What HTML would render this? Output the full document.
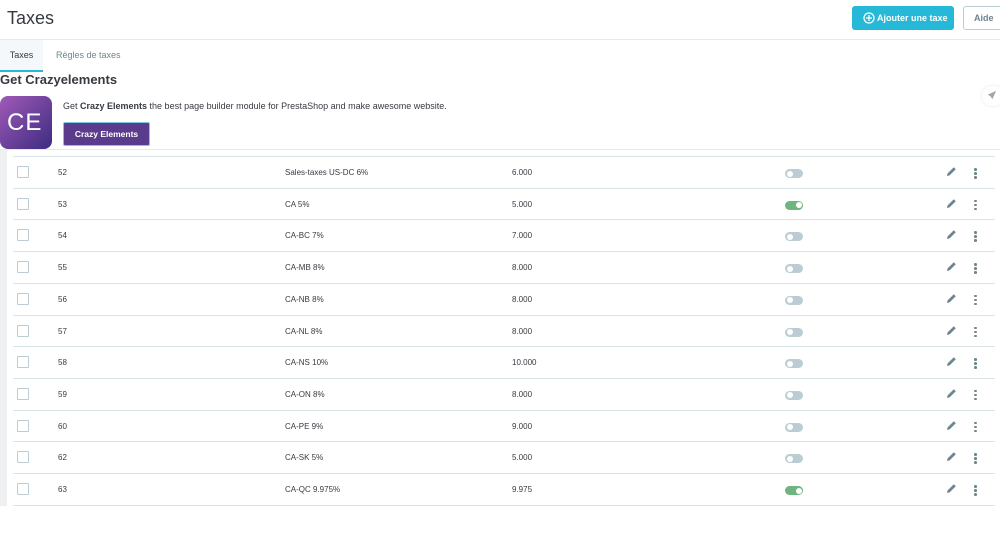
<!DOCTYPE html>
<html><head><meta charset="utf-8"><style>
*{box-sizing:border-box;margin:0;padding:0}
body{width:1000px;height:506px;overflow:hidden;background:#fff;font-family:"Liberation Sans",sans-serif;color:#363a41;position:relative}
.abs{position:absolute}
h1{position:absolute;left:7px;top:8px;font-size:18px;font-weight:normal;color:#363a41}
.btn1{position:absolute;left:852px;top:6px;width:102px;height:24px;background:#25b9d7;border-radius:3px;color:#fff;font-size:9px;font-weight:bold;line-height:24px;padding-left:25px;white-space:nowrap}
.btn2{position:absolute;left:963px;top:6px;width:40px;height:24px;border:1px solid #bbcdd2;border-radius:3px;color:#6c868e;font-size:9px;font-weight:bold;line-height:22px;padding-left:10px}
.hline{position:absolute;left:0;top:39px;width:1000px;height:1px;background:#e6eaec}
.tab1{position:absolute;left:0;top:40px;width:43px;height:32px;background:#f4f8fa;border-bottom:2px solid #25b9d7;font-size:9px;color:#363a41;line-height:31px;text-align:center}
.tab2{position:absolute;left:56px;top:40px;font-size:9px;color:#6c868e;line-height:31px}
.gc{position:absolute;left:0;top:72px;font-size:13px;font-weight:bold;color:#363a41}
.logo{position:absolute;left:0;top:96px;width:52px;height:53px;border-radius:8px;background:linear-gradient(135deg,#a05ab8,#3c2c80);color:#fff;font-size:24px;font-weight:normal;line-height:53px;padding-left:7px;letter-spacing:1px}
.desc{position:absolute;left:63px;top:101px;font-size:9px;color:#363a41}
.cbtn{position:absolute;left:63px;top:122px;width:87px;height:24px;background:#5b3b8c;border:1px solid #7cc8e0;border-radius:2px;color:#fff;font-size:8.5px;font-weight:bold;text-align:center;line-height:22px}
.sep{position:absolute;left:0;top:149px;width:1000px;height:1px;background:#e6eaec}
.strip{position:absolute;left:0;top:150px;width:7px;height:356px;background:#eef0f2}
.row{position:absolute;left:13px;width:982px;height:31.7px;border-top:1px solid #d9e4e7;font-size:8px;color:#363a41}
.row span{position:absolute;top:11px}
.cb{position:absolute;left:4px;top:9px;width:12px;height:12px;border:1px solid #bbcdd2;border-radius:1px;background:#fff}
.tg{position:absolute;left:772px;top:12px;width:18px;height:9px;border-radius:5px;background:#bbcdd2}
.tg::after{content:"";position:absolute;left:1.5px;top:1.5px;width:6px;height:6px;border-radius:50%;background:#fff}
.tg.on{background:#70b580}.tg.on::after{left:10.5px}
.pen{position:absolute;left:933px;top:9px}
.dots{position:absolute;left:961px;top:11px;width:3px}
.dots i{display:block;width:2.5px;height:2.5px;border-radius:50%;background:#6c868e;margin-bottom:1.5px}
</style></head><body>
<h1>Taxes</h1>
<div class="btn1"><svg class="abs" style="left:11px;top:6px" width="12" height="12" viewBox="0 0 12 12"><circle cx="6" cy="6" r="5" fill="none" stroke="#fff" stroke-width="1.3"/><path d="M6 3v6M3 6h6" stroke="#fff" stroke-width="1.3"/></svg>Ajouter une taxe</div>
<div class="btn2">Aide</div>
<div class="hline"></div>
<div class="tab1">Taxes</div>
<div class="tab2">Règles de taxes</div>
<div class="gc">Get Crazyelements</div>
<div class="logo">CE</div>
<div class="desc">Get <b>Crazy Elements</b> the best page builder module for PrestaShop and make awesome website.</div>
<div class="cbtn">Crazy Elements</div>
<div class="sep"></div>
<div class="strip"></div>
<div class="abs" style="left:982px;top:86px;width:22px;height:20px;border-radius:10px;background:#fff;box-shadow:0 0 3px #e4e4e4"><svg class="abs" style="left:4px;top:4px" width="11" height="11" viewBox="0 0 12 12"><path d="M11 1L2 5l3 2 2 3z" fill="#9aa7b0"/></svg></div>
<div id="rows"></div>
<script>
var d=[["52","Sales-taxes US-DC 6%","6.000",0],["53","CA 5%","5.000",1],["54","CA-BC 7%","7.000",0],["55","CA-MB 8%","8.000",0],["56","CA-NB 8%","8.000",0],["57","CA-NL 8%","8.000",0],["58","CA-NS 10%","10.000",0],["59","CA-ON 8%","8.000",0],["60","CA-PE 9%","9.000",0],["62","CA-SK 5%","5.000",0],["63","CA-QC 9.975%","9.975",1]];
var h="";d.forEach(function(r,i){var t=156+i*31.7;h+='<div class="row" style="top:'+t+'px"><div class="cb"></div><span style="left:45px">'+r[0]+'</span><span style="left:272px">'+r[1]+'</span><span style="left:499px">'+r[2]+'</span><div class="tg'+(r[3]?' on':'')+'"></div><svg class="pen" width="11" height="11" viewBox="0 0 11 11"><path d="M1 10l.6-2.6L7.8 1.2l2 2L3.6 9.4z" fill="#6c868e"/></svg><div class="dots"><i></i><i></i><i></i></div></div>'});
h+='<div class="row" style="top:'+(156+11*31.7)+'px"></div>';
document.getElementById("rows").innerHTML=h;
</script>
</body></html>
